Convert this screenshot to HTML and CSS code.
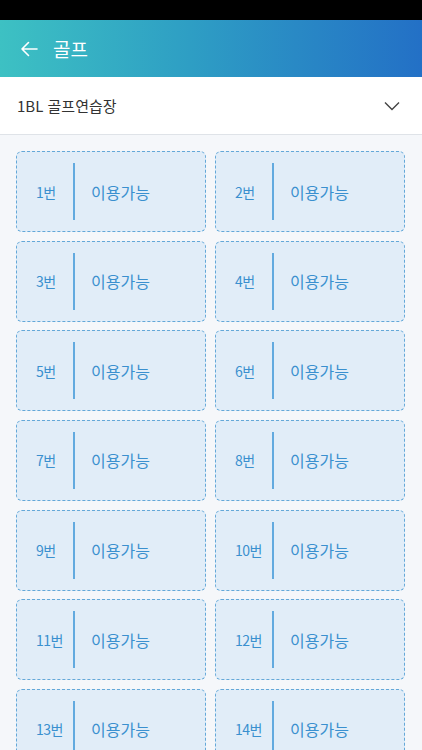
FILE: index.html
```html
<!DOCTYPE html>
<html lang="ko">
<head>
<meta charset="utf-8">
<link rel="stylesheet" href="styles.css">
</head>
<body>
<div class="status"></div>
<header class="appbar">
  <svg class="back" width="18" height="16" viewBox="0 0 18 16"><path d="M17 8H2M8.5 1.5L2 8l6.5 6.5" fill="none" stroke="#fff" stroke-width="1.6" stroke-linecap="round" stroke-linejoin="round"/></svg>
  <span class="title">골프</span>
</header>
<div class="select">
  <span>1BL 골프연습장</span>
  <svg width="16" height="10" viewBox="0 0 16 10"><path d="M1 1.5l7 7 7-7" fill="none" stroke="#444" stroke-width="1.4"/></svg>
</div>
<main class="grid">
  <div class="card"><span class="num">1번</span><span class="bar"></span><span class="state">이용가능</span></div>
  <div class="card"><span class="num">2번</span><span class="bar"></span><span class="state">이용가능</span></div>
  <div class="card"><span class="num">3번</span><span class="bar"></span><span class="state">이용가능</span></div>
  <div class="card"><span class="num">4번</span><span class="bar"></span><span class="state">이용가능</span></div>
  <div class="card"><span class="num">5번</span><span class="bar"></span><span class="state">이용가능</span></div>
  <div class="card"><span class="num">6번</span><span class="bar"></span><span class="state">이용가능</span></div>
  <div class="card"><span class="num">7번</span><span class="bar"></span><span class="state">이용가능</span></div>
  <div class="card"><span class="num">8번</span><span class="bar"></span><span class="state">이용가능</span></div>
  <div class="card"><span class="num">9번</span><span class="bar"></span><span class="state">이용가능</span></div>
  <div class="card"><span class="num">10번</span><span class="bar"></span><span class="state">이용가능</span></div>
  <div class="card"><span class="num">11번</span><span class="bar"></span><span class="state">이용가능</span></div>
  <div class="card"><span class="num">12번</span><span class="bar"></span><span class="state">이용가능</span></div>
  <div class="card"><span class="num">13번</span><span class="bar"></span><span class="state">이용가능</span></div>
  <div class="card"><span class="num">14번</span><span class="bar"></span><span class="state">이용가능</span></div>
</main>
</body>
</html>
```
FILE: styles.css
```css
* { box-sizing: border-box; }
html, body { margin: 0; padding: 0; }
body {
  width: 422px;
  height: 750px;
  overflow: hidden;
  background: #f5f7fa;
  font-family: "Noto Sans CJK KR", "Noto Sans", sans-serif;
}
.status { height: 20px; background: #000; }
.appbar {
  height: 57px;
  display: flex;
  align-items: center;
  padding-left: 20px;
  background: linear-gradient(90deg, #3dc1c3 0%, #2e9ec4 45%, #2370c6 100%);
}
.back { margin-right: 15px; }
.title { color: #fff; font-size: 19px; line-height: 1; }
.select {
  height: 58px;
  background: #fff;
  border-bottom: 1px solid #dfe3e8;
  display: flex;
  align-items: center;
  justify-content: space-between;
  padding: 0 22px 0 17px;
  font-size: 15px;
  color: #333;
}
.grid {
  display: grid;
  grid-template-columns: 190px 190px;
  column-gap: 9px;
  row-gap: 8.67px;
  padding: 16px 17px 0 16px;
}
.card {
  height: 81px;
  background: #e1edf8;
  border: 1px dashed #64a8d8;
  border-radius: 6px;
  display: flex;
  align-items: center;
}
.num {
  width: 56px;
  padding-left: 19px;
  font-size: 14px;
  color: #3a90cf;
  letter-spacing: -0.5px;
}
.bar {
  width: 2px;
  height: 57px;
  background: #62aadf;
}
.state {
  margin-left: 16px;
  font-size: 16px;
  color: #3a90cf;
}
```
